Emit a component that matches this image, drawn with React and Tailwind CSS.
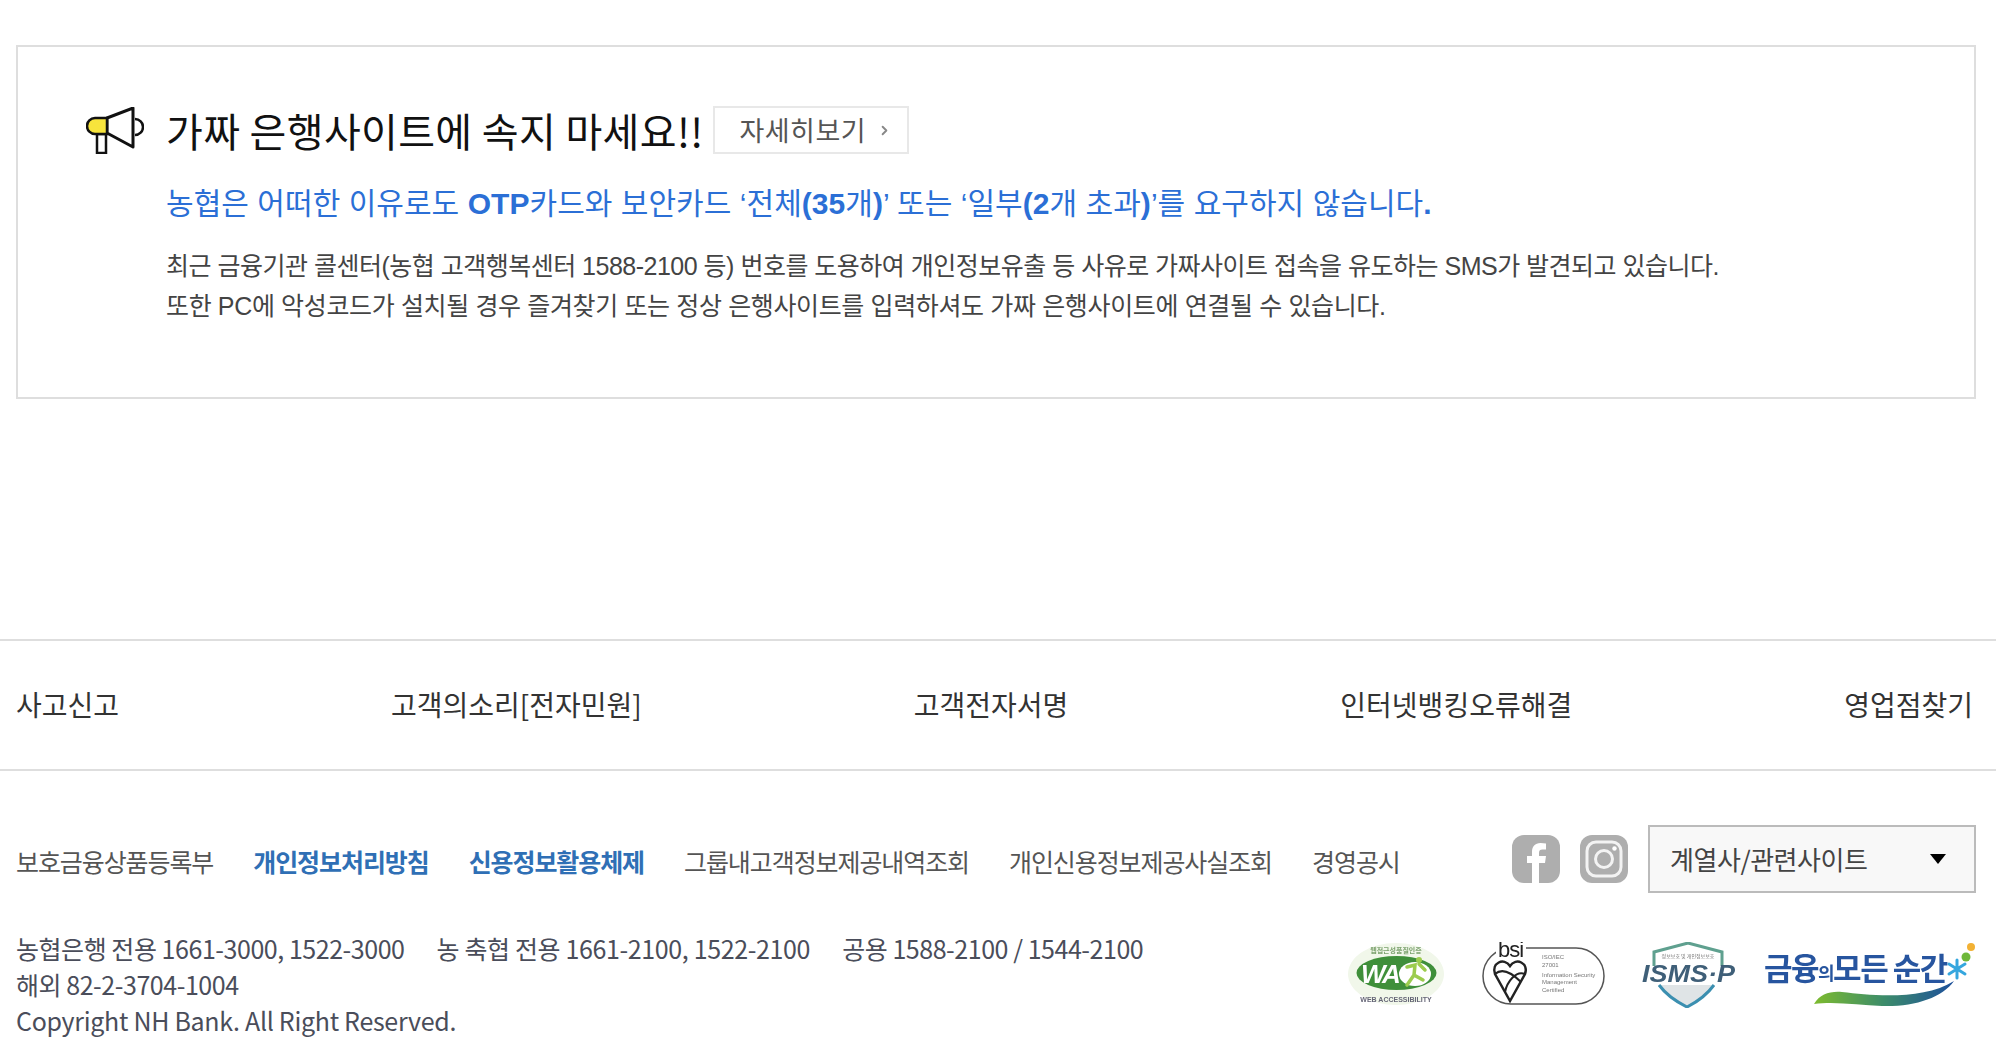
import { ChevronRight } from 'lucide-react'

const Megaphone = () => (
  <svg width="58" height="47" viewBox="0 0 58 47" className="flex-shrink-0 blur-[0.3px]">
    <path d="M49 12 A8 8 0 0 1 49 28" fill="#fff" stroke="#111" strokeWidth="2.500" />
    <path d="M21 11 L47 1 V40 L21 26 Z" fill="#fff" stroke="#111" strokeWidth="3" strokeLinejoin="round" />
    <path d="M11 27 H20 V46 H11 Z" fill="#fff" stroke="#111" strokeWidth="2.500" />
    <path d="M21 11 H9 A7.500 7.500 0 0 0 9 27 H21 Z" fill="#f7e43c" stroke="#111" strokeWidth="2.500" />
  </svg>
)

const Facebook = () => (
  <svg width="48" height="48" viewBox="0 0 48 48">
    <rect width="48" height="48" rx="12" fill="#aeaeae" />
    <path d="M27 48 V28 H33 L34 21 H27 V18 C27 15.500 28 14.500 30.500 14.500 H34 V8.500 C32 8.200 30.500 8 28.500 8 C23 8 20 11.500 20 17 V21 H15 V28 H20 V48 Z" fill="#fff" />
  </svg>
)

const Instagram = () => (
  <svg width="48" height="48" viewBox="0 0 48 48">
    <rect width="48" height="48" rx="12" fill="#aeaeae" />
    <rect x="7" y="7" width="34" height="34" rx="9" fill="none" stroke="#fff" strokeWidth="3" opacity="0.85" />
    <circle cx="24" cy="24" r="8.500" fill="none" stroke="#fff" strokeWidth="3" opacity="0.85" />
    <circle cx="34.500" cy="13.500" r="2.200" fill="#fff" />
  </svg>
)

const WaMark = () => (
  <svg width="98" height="64" viewBox="0 0 98 64" className="flex-shrink-0 blur-[0.6px]">
    <ellipse cx="49" cy="32" rx="48" ry="31" fill="#f1f7ea" />
    <ellipse cx="49.500" cy="31" rx="40" ry="17" fill="#3f8f3a" />
    <ellipse cx="68" cy="32" rx="16" ry="12" fill="#fff" />
    <text x="14" y="41" fontSize="26" fontWeight="700" fontStyle="italic" letterSpacing="-2" fill="#fff" fontFamily="Liberation Sans">WA</text>
    <path d="M60 25 L68 23 L67 33 L76 38 M67 33 L60 43 M72 22 L78 28" fill="none" stroke="#9ccc4e" strokeWidth="3.500" strokeLinecap="round" />
    <circle cx="72" cy="18" r="3" fill="#9ccc4e" />
    <text x="49" y="11" fontSize="7" fontWeight="700" textAnchor="middle" fill="#7da36f" fontFamily="Noto Sans CJK KR">웹접근성품질인증</text>
    <text x="49" y="60" fontSize="7" fontWeight="700" textAnchor="middle" fill="#667" fontFamily="Liberation Sans">WEB ACCESSIBILITY</text>
  </svg>
)

const BsiMark = () => (
  <svg width="123" height="64" viewBox="0 0 123 64" className="flex-shrink-0 blur-[0.4px]">
    <rect x="1" y="6" width="121" height="56" rx="28" fill="#fff" stroke="#555" strokeWidth="1.500" />
    <rect x="14" y="0" width="30" height="16" fill="#fff" />
    <text x="16" y="15" fontSize="22" letterSpacing="-1" fill="#222" fontFamily="Liberation Sans">bsi</text>
    <path d="M28 59 L13 32 C9 21 22 15 28 24 C34 15 47 21 43 32 Z" fill="#fff" stroke="#222" strokeWidth="2.500" />
    <path d="M13 32 C22 24 33 34 39 40 M43 32 C34 28 25 40 23 50" fill="none" stroke="#222" strokeWidth="2" />
    <g fontSize="6" fill="#777" fontFamily="Liberation Sans">
      <text x="60" y="17">ISO/IEC</text>
      <text x="60" y="25">27001</text>
      <text x="60" y="35">Information Security</text>
      <text x="60" y="42">Management</text>
      <text x="60" y="50">Certified</text>
    </g>
  </svg>
)

const IsmsMark = () => (
  <svg width="95" height="66" viewBox="0 0 95 66" className="flex-shrink-0 blur-[0.4px]">
    <path d="M13 24 V10 L47 1 L81 10 V24" fill="none" stroke="#5fa08f" strokeWidth="3" />
    <path d="M18 43 C26 54 36 60 46 65 C56 60 65 54 73 43 Z" fill="#dfe4e6" />
    <path d="M18 43 C26 54 36 60 46 65 C56 60 65 54 73 43" fill="none" stroke="#3b8fb0" strokeWidth="3" />
    <text x="47" y="16" fontSize="5" textAnchor="middle" fill="#777" fontFamily="Noto Sans CJK KR">정보보호 및 개인정보보호</text>
    <text x="1" y="40" fontSize="24" fontWeight="700" fontStyle="italic" textLength="93" lengthAdjust="spacingAndGlyphs" fill="#3f5f78" fontFamily="Liberation Sans">ISMS·P</text>
  </svg>
)

const FinanceMark = () => (
  <svg width="212" height="66" viewBox="0 0 212 66" className="flex-shrink-0 blur-[0.4px]">
    <defs>
      <linearGradient id="swoosh" x1="0" x2="1">
        <stop offset="0" stopColor="#7dbb2e" />
        <stop offset="0.5" stopColor="#3c8c6a" />
        <stop offset="1" stopColor="#1d4f9c" />
      </linearGradient>
    </defs>
    <text x="0" y="38" fontSize="31" fontWeight="700" fill="#27559f" letterSpacing="-1.500" fontFamily="Noto Sans CJK KR">
      금융<tspan fontSize="18">의</tspan>모든 순간
    </text>
    <path d="M50 62 C56 52 66 49 78 50 C110 54 160 58 190 39 C178 56 150 65 118 64 C95 63 70 59 50 62 Z" fill="url(#swoosh)" />
    <path d="M193 18 V36 M185 22 L201 32 M201 22 L185 32" stroke="#35a6de" strokeWidth="3" strokeLinecap="round" />
    <circle cx="202" cy="15" r="4.500" fill="#6fb83a" />
    <circle cx="207" cy="5" r="4" fill="#f2b134" />
  </svg>
)

const mainLinks = ['사고신고', '고객의소리[전자민원]', '고객전자서명', '인터넷뱅킹오류해결', '영업점찾기']

const subLinks = [
  { label: '보호금융상품등록부' },
  { label: '개인정보처리방침', strong: true },
  { label: '신용정보활용체제', strong: true },
  { label: '그룹내고객정보제공내역조회' },
  { label: '개인신용정보제공사실조회' },
  { label: '경영공시' },
]

export default function App() {
  return (
    <div className="w-[1996px] h-[1054px] bg-white overflow-hidden pt-[45px] font-['Noto_Sans_CJK_KR','Noto_Sans',sans-serif]">
      {/* Notice box */}
      <div className="mx-4 w-[1960px] h-[354px] border-2 border-[#dedede] pl-[68px] pt-[59px] font-['Liberation_Sans','Noto_Sans_CJK_KR',sans-serif]">
        <div className="flex items-center h-12">
          <Megaphone />
          <h2 className="ml-[22px] text-[40px] leading-[48px] font-normal text-[#111] tracking-[0.35px] font-['Noto_Sans_CJK_KR',sans-serif]">가짜 은행사이트에 속지 마세요!!</h2>
          <button className="ml-[10px] w-[196px] h-12 border-2 border-[#e8e8e8] flex items-center pl-6 text-[27px] text-[#555] tracking-[0.5px] font-['Noto_Sans_CJK_KR',sans-serif]">
            자세히보기
            <ChevronRight size={15} strokeWidth={3} className="ml-[11px] text-[#888]" />
          </button>
        </div>
        <p className="ml-[80px] mt-[30px] text-[30px] leading-[40px] text-[#2b6fd6] tracking-[0.05px]">
          농협은 어떠한 이유로도 <b>OTP</b>카드와 보안카드 ‘전체<b>(35</b>개<b>)</b>’ 또는 ‘일부<b>(2</b>개 초과<b>)</b>’를 요구하지 않습니다<b>.</b>
        </p>
        <div className="ml-[80px] mt-[22px] text-[25px] leading-[40px] text-[#444]">
          <p className="tracking-[-0.5px]">최근 금융기관 콜센터(농협 고객행복센터 1588-2100 등) 번호를 도용하여 개인정보유출 등 사유로 가짜사이트 접속을 유도하는 SMS가 발견되고 있습니다.</p>
          <p className="tracking-[-0.36px]">또한 PC에 악성코드가 설치될 경우 즐겨찾기 또는 정상 은행사이트를 입력하셔도 가짜 은행사이트에 연결될 수 있습니다.</p>
        </div>
      </div>

      {/* Footer main links */}
      <div className="mt-[240px] border-y-2 border-[#dedede] h-[132px] pl-4 pr-[23px] pb-[2px] flex items-center justify-between">
        {mainLinks.map(l => (
          <a key={l} className="text-[28px] text-[#333]">{l}</a>
        ))}
      </div>

      {/* Sub links + selector */}
      <div className="mt-[54px] pl-4 pr-5 flex items-center justify-between h-[68px]">
        <div className="flex items-center gap-10 mt-[5px]">
          {subLinks.map(l => (
            <a key={l.label} className={`text-[25px] tracking-[-1.08px] ${l.strong ? 'font-bold text-[#2f6fb5]' : 'text-[#555]'}`}>{l.label}</a>
          ))}
        </div>
        <div className="flex items-center">
          <Facebook />
          <span className="ml-5"><Instagram /></span>
          <div className="ml-5 w-[328px] h-[68px] border-2 border-[#bbb] bg-[#f8f8f8] flex items-center justify-between pl-5 pr-[28px]">
            <span className="text-[26px] text-[#444] tracking-[-0.45px] -mt-[2px]">계열사/관련사이트</span>
            <span className="w-0 h-0 border-x-[8px] border-x-transparent border-t-[10px] border-t-black" />
          </div>
        </div>
      </div>

      {/* Contact + certification marks */}
      <div className="mt-[37px] pl-4 pr-5 flex justify-between">
        <div className="text-[25px] leading-[36px] text-[#4a4d5a] tracking-[-0.3px]">
          <p className="flex gap-8">
            <span className="tracking-[-0.45px]">농협은행 전용 1661-3000, 1522-3000</span>
            <span className="tracking-[-0.36px]">농 축협 전용 1661-2100, 1522-2100</span>
            <span className="tracking-[-0.45px]">공용 1588-2100 / 1544-2100</span>
          </p>
          <p className="tracking-[-0.45px]">해외 82-2-3704-1004</p>
          <p>Copyright NH Bank. All Right Reserved.</p>
        </div>
        <div className="flex items-start mt-3">
          <WaMark />
          <span className="ml-[37px]"><BsiMark /></span>
          <span className="ml-[36px]"><IsmsMark /></span>
          <span className="ml-7"><FinanceMark /></span>
        </div>
      </div>
    </div>
  )
}
